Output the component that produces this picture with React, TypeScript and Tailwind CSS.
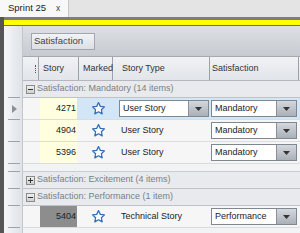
import React from 'react';

const font = { fontFamily: '"Liberation Sans", Arial, sans-serif' };

const Star = () => (
  <svg width="15" height="15" viewBox="0 0 24 24" fill="#ffffff" stroke="#2f6db5" strokeWidth="2" strokeLinejoin="round">
    <path d="M12 2.5l2.9 6.1 6.6.8-4.9 4.6 1.3 6.6L12 17.3l-5.9 3.3 1.3-6.6-4.9-4.6 6.6-.8z" />
  </svg>
);

const Combo = ({ value, wide }: { value: string; wide?: boolean }) => (
  <div className={`h-[17px] flex border border-[#7f8791] bg-white ${wide ? 'w-[90px]' : 'w-[86px]'}`}>
    <div className="flex-1 flex items-center pl-[3px] text-[9px] text-[#222]">{value}</div>
    <div className="w-[20px] flex items-center justify-center border-l border-[#8a9099] bg-linear-to-b from-[#d5d8dd] to-[#aab0b8]">
      <svg width="7" height="4" viewBox="0 0 7 4">
        <path d="M0 0h7L3.5 4z" fill="#333" />
      </svg>
    </div>
  </div>
);

const Strip = ({ tick, arrow }: { tick?: boolean; arrow?: boolean }) => (
  <div className="w-[19px] shrink-0 flex flex-col bg-linear-to-r from-[#f5f6f8] to-[#e0e3e7] border-r border-[#c3c7cc]">
    <div className="flex-1 flex items-center pl-[8px]">
      {arrow && (
        <svg width="5" height="8" viewBox="0 0 5 8">
          <path d="M0 0l5 4-5 4z" fill="#8a9098" />
        </svg>
      )}
    </div>
    {tick && <div className="h-px ml-[4px] w-[12px] bg-[#9da3ab]" />}
  </div>
);

const GroupRow = ({ label, open }: { label: string; open: boolean }) => (
  <div className="h-[17px] flex">
    <Strip tick />
    <div className="flex-1 flex items-center pl-[3px] bg-[#e9eaed] border-b border-[#bfc3c8]">
      <div className="w-[9px] h-[9px] border border-[#8c8c8c] bg-linear-to-b from-[#f0f0f0] to-[#cfcfcf] flex items-center justify-center">
        <div className="relative w-[5px] h-[5px] flex items-center justify-center">
          <div className="w-[5px] h-px bg-[#333]" />
          {!open && <div className="absolute w-px h-[5px] bg-[#333]" />}
        </div>
      </div>
      <span className="ml-[2px] text-[9px] text-[#7a8088]">{label}</span>
    </div>
  </div>
);

interface Row {
  id: string;
  type: string;
  sat: string;
  selected?: boolean;
  gray?: boolean;
  typeCombo?: boolean;
}

const DataRow = ({ row }: { row: Row }) => (
  <div className="h-[22px] flex">
    <Strip tick arrow={row.selected} />
    <div className="w-[17px] bg-[#f6f6f7] border-b border-[#dadcdf]" />
    <div className={`flex-1 flex border-b border-[#dadcdf] ${row.selected ? 'bg-[#d3e6f8]' : 'bg-[#f6f6f7]'}`}>
      <div
        className={`w-[37px] flex items-center justify-end pr-[1px] text-[9px] text-[#222] ${
          row.gray ? 'bg-[#8d8d8d]' : 'bg-[#ffffe0]'
        }`}
      >
        {row.id}
      </div>
      <div className="w-[42px] flex items-center justify-center">
        <Star />
      </div>
      <div className="w-[91px] flex items-center">
        {row.typeCombo ? (
          <Combo value={row.type} wide />
        ) : (
          <span className="pl-[2px] text-[9px] text-[#222]">{row.type}</span>
        )}
      </div>
      <div className="flex-1 flex items-center pl-[1px]">
        <Combo value={row.sat} />
      </div>
    </div>
  </div>
);

const mandatory: Row[] = [
  { id: '4271', type: 'User Story', sat: 'Mandatory', selected: true, typeCombo: true },
  { id: '4904', type: 'User Story', sat: 'Mandatory' },
  { id: '5396', type: 'User Story', sat: 'Mandatory' }
];

export default function App() {
  return (
    <div className="w-[300px] h-[233px] overflow-hidden flex flex-col bg-[#e4e4e4]" style={font}>
      {/* Tab strip */}
      <div className="h-[17px] shrink-0 flex">
        <div className="w-[69px] bg-[#f8f8f8] border-r border-[#c8c8c8] flex items-center pl-[8px] text-[9.5px] text-[#222]">
          <span>Sprint 25</span>
          <span className="ml-[10px] text-[8.5px] text-[#444]">x</span>
        </div>
      </div>

      <div className="flex flex-1 min-h-0">
        <div className="w-[4px] shrink-0 bg-[#555555]" />
        <div className="flex-1 flex flex-col min-w-0">
          <div className="h-[3px] bg-[#7d7d7d]" />
          <div className="h-[5px] bg-[#ffff00]" />
          <div className="h-px bg-[#6e6e6e]" />

          {/* Group by panel */}
          <div className="h-[31px] flex">
            <Strip />
            <div className="flex-1 bg-linear-to-b from-[#dde0e4] to-[#c7cad0] border-b border-[#a6aab0] pl-[8px] pt-[7px]">
              <div className="w-[64px] h-[17px] border border-[#a3a7ad] bg-linear-to-b from-[#f2f3f5] to-[#dcdfe3] flex items-center pl-[2px] text-[9.5px] text-[#444]">
                Satisfaction
              </div>
            </div>
          </div>

          {/* Column headers */}
          <div className="h-[24px] flex">
            <Strip />
            <div className="flex-1 flex bg-linear-to-b from-[#f1f2f4] to-[#e2e5e9] border-b border-[#b4b8be] text-[9px] text-[#333]">
              <div className="w-[16px] flex items-center justify-end pr-[2px] border-r border-[#9ca2aa]">
                <div className="h-[8px] border-l border-dotted border-[#555]" />
              </div>
              <div className="w-[40px] flex items-center pl-[4px] border-r border-[#9ca2aa]">Story</div>
              <div className="w-[34px] flex items-center pl-[4px] border-r border-[#9ca2aa]">Marked</div>
              <div className="w-[97px] flex items-center pl-[9px] border-r border-[#9ca2aa]">Story Type</div>
              <div className="w-[89px] flex items-center pl-[2px] border-r border-[#9ca2aa]">Satisfaction</div>
              <div className="flex-1" />
            </div>
          </div>

          <GroupRow label="Satisfaction: Mandatory (14 items)" open />
          {mandatory.map((r) => (
            <DataRow key={r.id} row={r} />
          ))}

          <div className="h-[8px] flex">
            <Strip tick />
            <div className="flex-1 bg-[#f2f3f4] border-b border-[#c9ccd0]" />
          </div>

          <GroupRow label="Satisfaction: Excitement (4 items)" open={false} />
          <GroupRow label="Satisfaction: Performance (1 item)" open />
          <DataRow row={{ id: '5404', type: 'Technical Story', sat: 'Performance', gray: true }} />

          <div className="flex-1 flex">
            <Strip />
            <div className="flex-1 bg-[#f2f3f4]" />
          </div>
        </div>
      </div>
    </div>
  );
}
